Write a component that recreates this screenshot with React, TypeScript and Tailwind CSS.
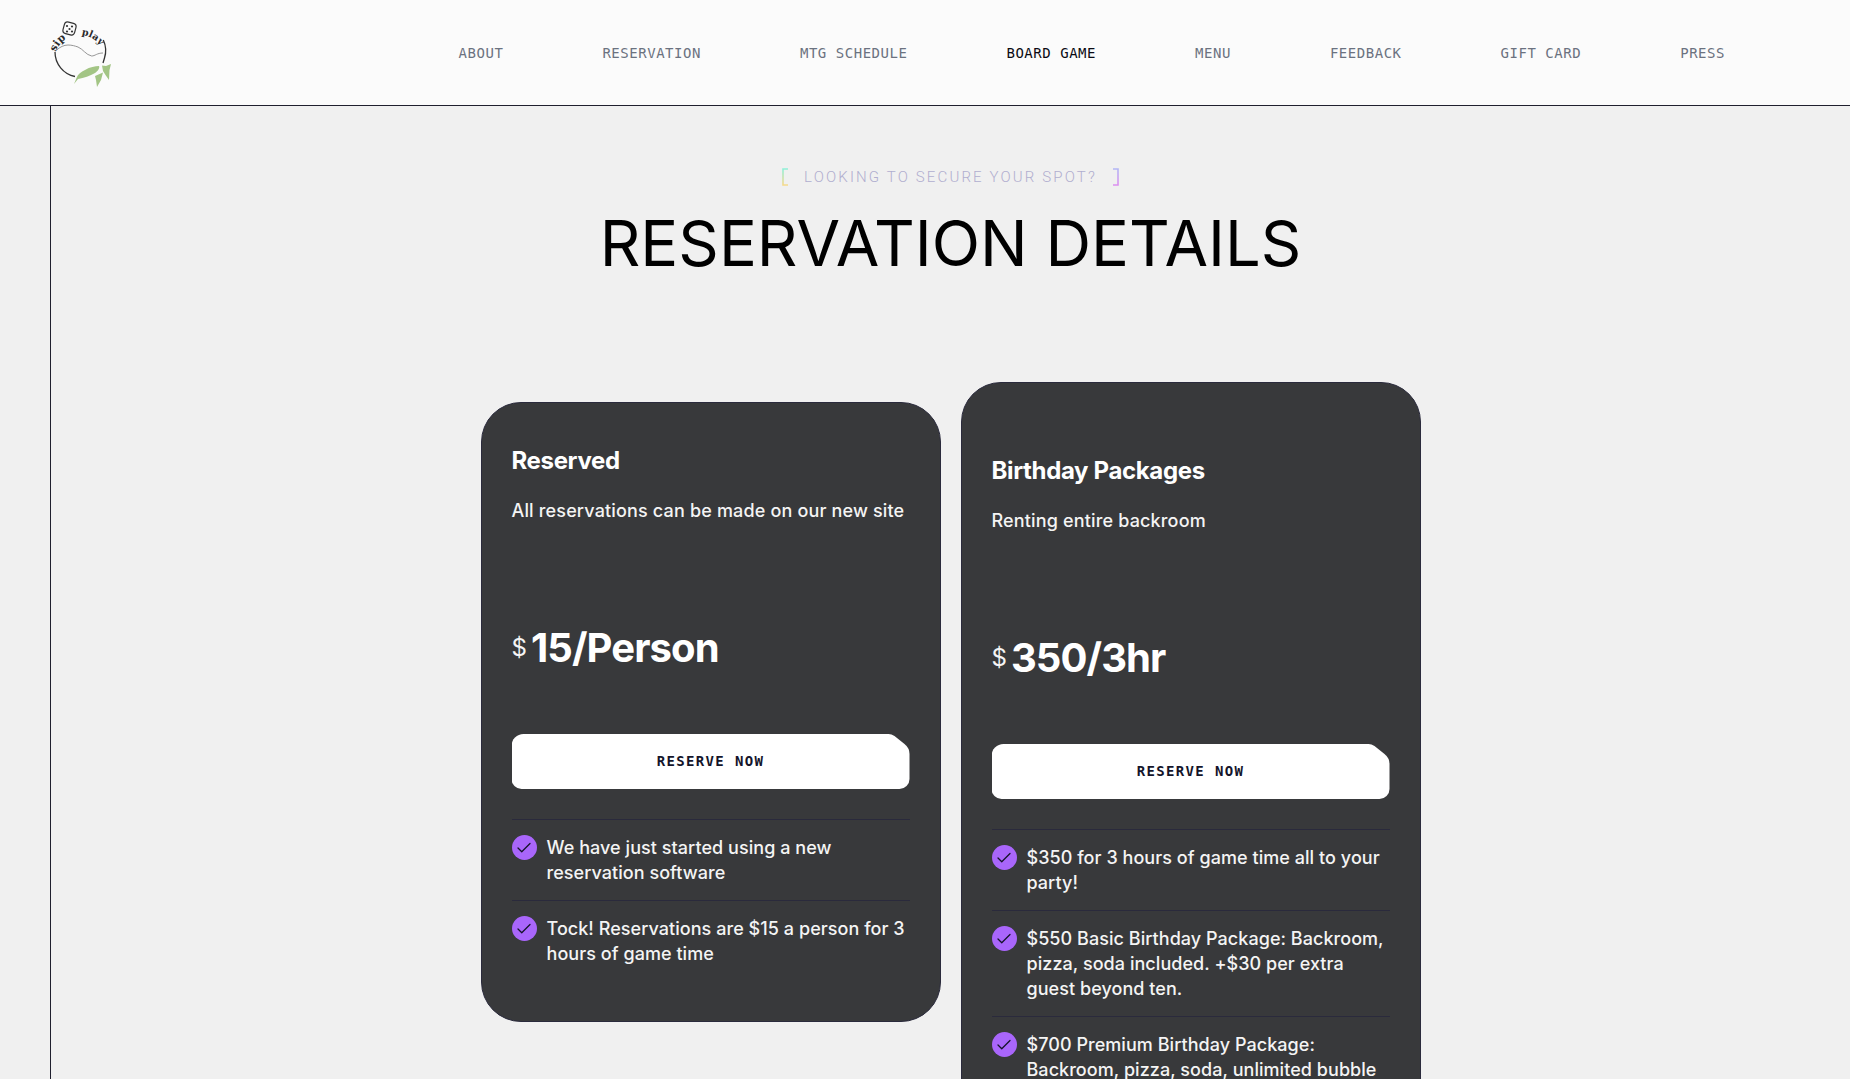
import React from "react";
import { Check } from "lucide-react";

const nav = ["ABOUT", "RESERVATION", "MTG SCHEDULE", "BOARD GAME", "MENU", "FEEDBACK", "GIFT CARD", "PRESS"];

function Logo() {
  return (
    <svg width="66" height="72" viewBox="0 0 66 72" className="block overflow-visible">
      <defs>
        <path id="arcLogo" d="M 4.5 43 A 25 25 0 0 1 54 38" fill="none" />
      </defs>
      <text fontFamily="'DejaVu Serif', serif" fontWeight="700" fontSize="10.5" fill="#2a2a2a">
        <textPath href="#arcLogo" startOffset="8">sip</textPath>
      </text>
      <text fontFamily="'DejaVu Serif', serif" fontWeight="700" fontSize="9.5" fill="#2a2a2a">
        <textPath href="#arcLogo" startOffset="41">play</textPath>
      </text>
      <rect x="13.5" y="5.5" width="12" height="12" rx="3.5" fill="#fafafa" stroke="#333" strokeWidth="1.2" transform="rotate(15 19.5 11.5)" />
      <circle cx="17" cy="9" r="1.1" fill="#333" />
      <circle cx="22" cy="9.5" r="1.1" fill="#333" />
      <circle cx="19.5" cy="12" r="1.1" fill="#333" />
      <circle cx="17" cy="14.5" r="1.1" fill="#333" />
      <circle cx="22" cy="14.5" r="1.1" fill="#333" />
      <path d="M 53.3 23 A 25 25 0 0 1 54.5 41 L 53 46" fill="none" stroke="#333" strokeWidth="1.3" />
      <path d="M 5 35 A 25 25 0 0 0 25 59.5" fill="none" stroke="#333" strokeWidth="1.3" />
      <path d="M 6.7 33 C 10 30 14 28 18 28 C 22 28 25 29 28 30 C 33 32 36 38 41.7 39 C 45 39 47 36 53 36" fill="none" stroke="#8a8a8a" strokeWidth="0.9" />
      <path d="M 24 67 L 26.5 61 C 28 57 31 55 35 53 C 40 50 45 49 49 49 C 50 51 48 54 45 56 C 40 59 34 61 28 62 Z" fill="#a3c585" />
      <path d="M 52 48.5 L 56 49 L 61 47 L 59.5 53 L 59 63 L 55.5 58 L 53 54 Z" fill="#a3c585" />
      <path d="M 45 59 L 53 55.5 L 51 63 L 47 70 L 46 63 Z" fill="#a3c585" />
    </svg>
  );
}

function Bracket({ side }: { side: "l" | "r" }) {
  const id = side === "l" ? "brL" : "brR";
  return (
    <svg width="7" height="18" viewBox="0 0 7 18" className="block">
      <defs>
        <linearGradient id={id} x1="0" y1="0" x2="0" y2="1">
          <stop offset="0" stopColor={side === "l" ? "#8ff0d8" : "#b3b6f5"} />
          <stop offset="1" stopColor={side === "l" ? "#f6d98a" : "#dc8ff0"} />
        </linearGradient>
      </defs>
      <path d={side === "l" ? "M6 1H1V17H6" : "M1 1H6V17H1"} fill="none" stroke={`url(#${id})`} strokeWidth="1.6" />
    </svg>
  );
}

function Item({ text }: { text: string }) {
  return (
    <li className="flex gap-[10px] border-t border-[#2a2a3c] pt-[15px] pb-[15px]">
      <span className="flex h-[25px] w-[25px] shrink-0 items-center justify-center rounded-full bg-[#a966fb]">
        <Check size={18} strokeWidth={1.7} color="#14142a" />
      </span>
      <span className="text-[18px] leading-[25px] font-medium tracking-[0.05px] text-[#f4f4f4]">{text}</span>
    </li>
  );
}

function Card({ title, desc, price, items, tall }: { title: string; desc: string; price: string; items: string[]; tall?: boolean }) {
  return (
    <div className={`w-[460px] shrink-0 rounded-[40px] border border-[#2a2a3c] bg-[#38393b] px-[30px] pb-[40px] ${tall ? "pt-[74px]" : "mt-[20px] pt-[44px]"}`}>
      <h3 className="text-[24px] leading-[28px] font-bold tracking-[-0.35px] text-white">{title}</h3>
      <p className="mt-[23px] h-[126px] text-[18px] leading-[25px] font-medium tracking-[0.16px] text-[#f4f4f4]">{desc}</p>
      <div className="flex items-center gap-[4px]">
        <span className="text-[24px] leading-[30px] text-[#f4f4f4]">$</span>
        <span className="text-[40px] leading-[48px] font-bold tracking-[-0.9px] text-white">{price}</span>
      </div>
      <button className="mt-[62px] block h-[55px] w-full bg-white font-['DejaVu_Sans_Mono',monospace] text-[14px] font-bold tracking-[1.33px] text-[#14142a] [clip-path:path('M12_0H377Q380_0_383_2L393_10Q398_14_398_20V45A10_10_0_0_1_388_55H10A10_10_0_0_1_0_45V12A12_12_0_0_1_12_0Z')]">
        RESERVE NOW
      </button>
      <ul className="mt-[30px]">
        {items.map((t) => (
          <Item key={t} text={t} />
        ))}
      </ul>
    </div>
  );
}

export default function App() {
  return (
    <div className="flex h-screen flex-col overflow-hidden bg-[#f0f0f0] font-['Inter',sans-serif]">
      <header className="flex h-[106px] shrink-0 items-center border-b border-[#1f1f2e] bg-[#fbfbfb] pr-[125px] pl-[50px]">
        <Logo />
        <nav className="mt-[2px] ml-auto flex gap-[99px] font-['DejaVu_Sans_Mono',monospace] text-[14px] font-normal tracking-[0.53px] text-[#6b7280]">
          {nav.map((n) => (
            <a key={n} className={n === "BOARD GAME" ? "text-[#0b0b14]" : ""}>
              {n}
            </a>
          ))}
        </nav>
      </header>
      <main className="ml-[50px] flex-1 border-l border-[#1f1f2e]">
        <div className="mt-[61px] flex items-center justify-center gap-[15px]">
          <Bracket side="l" />
          <span className="font-['Roboto',sans-serif] text-[15px] leading-[20px] font-light tracking-[2.15px] text-[#b0aecf]">LOOKING TO SECURE YOUR SPOT?</span>
          <Bracket side="r" />
        </div>
        <h1 className="mt-[16px] text-center text-[63.2px] leading-[80px] font-normal text-black">RESERVATION DETAILS</h1>
        <div className="mt-[99px] flex items-start justify-center gap-[20px]">
          <Card
            title="Reserved"
            desc="All reservations can be made on our new site"
            price="15/Person"
            items={["We have just started using a new reservation software", "Tock! Reservations are $15 a person for 3 hours of game time"]}
          />
          <Card
            tall
            title="Birthday Packages"
            desc="Renting entire backroom"
            price="350/3hr"
            items={[
              "$350 for 3 hours of game time all to your party!",
              "$550 Basic Birthday Package: Backroom, pizza, soda included. +$30 per extra guest beyond ten.",
              "$700 Premium Birthday Package: Backroom, pizza, soda, unlimited bubble tea included.",
            ]}
          />
        </div>
      </main>
    </div>
  );
}
